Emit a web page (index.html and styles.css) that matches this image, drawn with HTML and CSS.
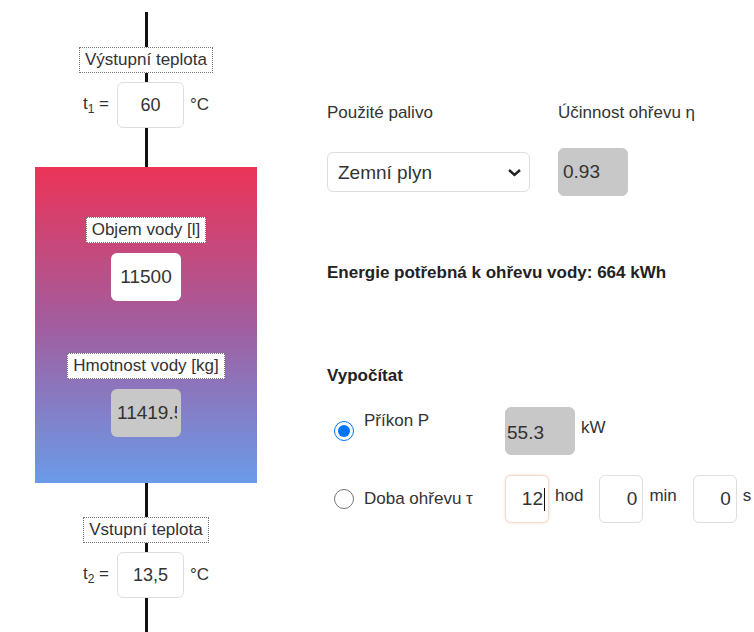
FILE: index.html
```html
<!DOCTYPE html>
<html lang="cs">

<head>
    <meta charset="UTF-8">
    <meta name="viewport" content="width=device-width, initial-scale=1.0">
    <title>Ohřev vody</title>
    <link rel="stylesheet" href="styles.css">
</head>

<body>
    <div class="page">
        <!-- pipe with the tank -->
        <div class="pipe">
            <div class="tag">Výstupní teplota</div>
            <div class="temp-row">
                <span class="sym">t<sub>1</sub> =</span>
                <input class="field temp" value="60">
                <span class="unit">°C</span>
            </div>

            <div class="tank">
                <div class="tag">Objem vody [l]</div>
                <input class="field tank-field" value="11500">
                <div class="tag tag-mass">Hmotnost vody [kg]</div>
                <input class="field tank-field readonly" value="11419.5" readonly>
            </div>

            <div class="tag tag-in">Vstupní teplota</div>
            <div class="temp-row">
                <span class="sym">t<sub>2</sub> =</span>
                <input class="field temp" value="13,5">
                <span class="unit">°C</span>
            </div>
        </div>

        <!-- calculation -->
        <div class="calc">
            <div class="fuel">
                <label class="cap" for="fuel">Použité palivo</label>
                <label class="cap" for="eff">Účinnost ohřevu η</label>
                <div class="select-wrap">
                    <select id="fuel" class="fuel-select">
                        <option>Zemní plyn</option>
                        <option>Elektřina</option>
                        <option>Uhlí</option>
                    </select>
                    <svg class="chev" width="15" height="9" viewBox="0 0 15 9">
                        <path d="M2 2 L7.5 7 L13 2" fill="none" stroke="#222" stroke-width="2.4" />
                    </svg>
                </div>
                <input id="eff" class="field readonly eff" value="0.93" readonly>
            </div>

            <p class="energy">Energie potřebná k ohřevu vody: 664 kWh</p>

            <p class="section">Vypočítat</p>
            <div class="mode">
                <label class="choice"><input type="radio" name="mode" checked> <span class="choice-up">Příkon P</span></label>
                <div class="values">
                    <input class="field readonly power" value="55.3" readonly>
                    <span class="unit unit-up">kW</span>
                </div>

                <label class="choice"><input type="radio" name="mode"> <span>Doba ohřevu τ</span></label>
                <div class="values">
                    <span class="caret-wrap">
                        <input class="field dur dur-focus" value="12">
                        <span class="caret"></span>
                    </span>
                    <span class="unit unit-up spaced">hod</span>
                    <input class="field dur" value="0">
                    <span class="unit unit-up spaced">min</span>
                    <input class="field dur" value="0">
                    <span class="unit unit-up">s</span>
                </div>
            </div>
        </div>
    </div>
</body>

</html>
```

FILE: styles.css
```css
body {
    margin: 0;
    font-family: 'Liberation Sans', Arial, sans-serif;
    font-size: 17px;
    color: #333;
    background: #fff;
}

.page {
    display: flex;
    align-items: flex-start;
}

/* left part */
.pipe {
    width: 222px;
    margin-left: 35px;
    min-height: 632px;
    box-sizing: border-box;
    padding-top: 47px;
    display: flex;
    flex-direction: column;
    align-items: center;
    background: linear-gradient(#111, #111) no-repeat 110px 12px / 3px calc(100% - 12px);
}

.tag {
    background: #fff;
    border: 1px dotted #777;
    padding: 2px 5px;
    line-height: 20px;
    font-size: 17px;
    white-space: nowrap;
}

.temp-row {
    display: flex;
    align-items: center;
    margin-top: 9px;
}

.sym {
    margin-right: 8px;
}

.sym sub {
    font-size: 12px;
}

.unit {
    margin-left: 6px;
}

.field {
    box-sizing: border-box;
    border: 1px solid #dedede;
    border-radius: 6px;
    background: #fff;
    font-family: inherit;
    font-size: 19px;
    color: #333;
    outline: none;
}

.temp {
    width: 67px;
    height: 46px;
    font-size: 18px;
    text-align: center;
}

.tank {
    margin-top: 39px;
    width: 222px;
    height: 316px;
    box-sizing: border-box;
    padding-top: 50px;
    display: flex;
    flex-direction: column;
    align-items: center;
    background: linear-gradient(#eb3457, #a25d9f 50%, #6a9be9);
}

.tank-field {
    margin-top: 10px;
    width: 70px;
    height: 48px;
    border: none;
    text-align: center;
}

.tank-field.readonly {
    text-align: left;
    padding: 0 4px 0 6px;
}

.tag-mass {
    margin-top: 52px;
}

.tag-in {
    margin-top: 34px;
}

.readonly {
    background: #c8c8c8;
    border-color: #c8c8c8;
}

/* right part */
.calc {
    margin-left: 70px;
    padding-top: 103px;
}

.fuel {
    display: grid;
    grid-template-columns: 231px 70px;
    row-gap: 25px;
    align-items: center;
}

.cap {
    line-height: 20px;
    white-space: nowrap;
}

.select-wrap {
    position: relative;
    width: 203px;
    height: 40px;
}

.fuel-select {
    appearance: none;
    -webkit-appearance: none;
    width: 100%;
    height: 100%;
    box-sizing: border-box;
    border: 1px solid #dedede;
    border-radius: 6px;
    background: #fff;
    padding-left: 10px;
    font-family: inherit;
    font-size: 19px;
    color: #333;
    outline: none;
}

.chev {
    position: absolute;
    right: 8px;
    top: 16px;
    pointer-events: none;
}

.eff {
    width: 70px;
    height: 48px;
    padding-left: 4px;
}

.energy {
    margin: 67px 0 0;
    line-height: 20px;
    font-weight: bold;
    color: #222;
}

.section {
    margin: 83px 0 0;
    line-height: 20px;
    font-weight: bold;
    color: #222;
}

.mode {
    margin-top: 21px;
    display: grid;
    grid-template-columns: 178px auto;
    row-gap: 20px;
    align-items: center;
}

.choice {
    display: flex;
    align-items: center;
    gap: 10px;
    padding-left: 7px;
    white-space: nowrap;
}

.choice input {
    width: 20px;
    height: 20px;
    margin: 0;
}

.choice-up {
    margin-bottom: 20px;
}

.values {
    display: flex;
    align-items: center;
}

.power {
    width: 70px;
    height: 48px;
    padding: 4px 0 0 1px;
}

.unit-up {
    margin-bottom: 6px;
}

.spaced {
    margin-right: 16px;
}

.dur {
    width: 44px;
    height: 48px;
    text-align: right;
    padding-right: 5px;
}

.dur-focus {
    border-color: #f1dccf;
    box-shadow: 0 0 3px rgba(230, 150, 110, 0.35);
}

.caret-wrap {
    position: relative;
    display: block;
}

.caret {
    position: absolute;
    right: 4px;
    top: 13px;
    width: 1px;
    height: 23px;
    background: #111;
}
```
